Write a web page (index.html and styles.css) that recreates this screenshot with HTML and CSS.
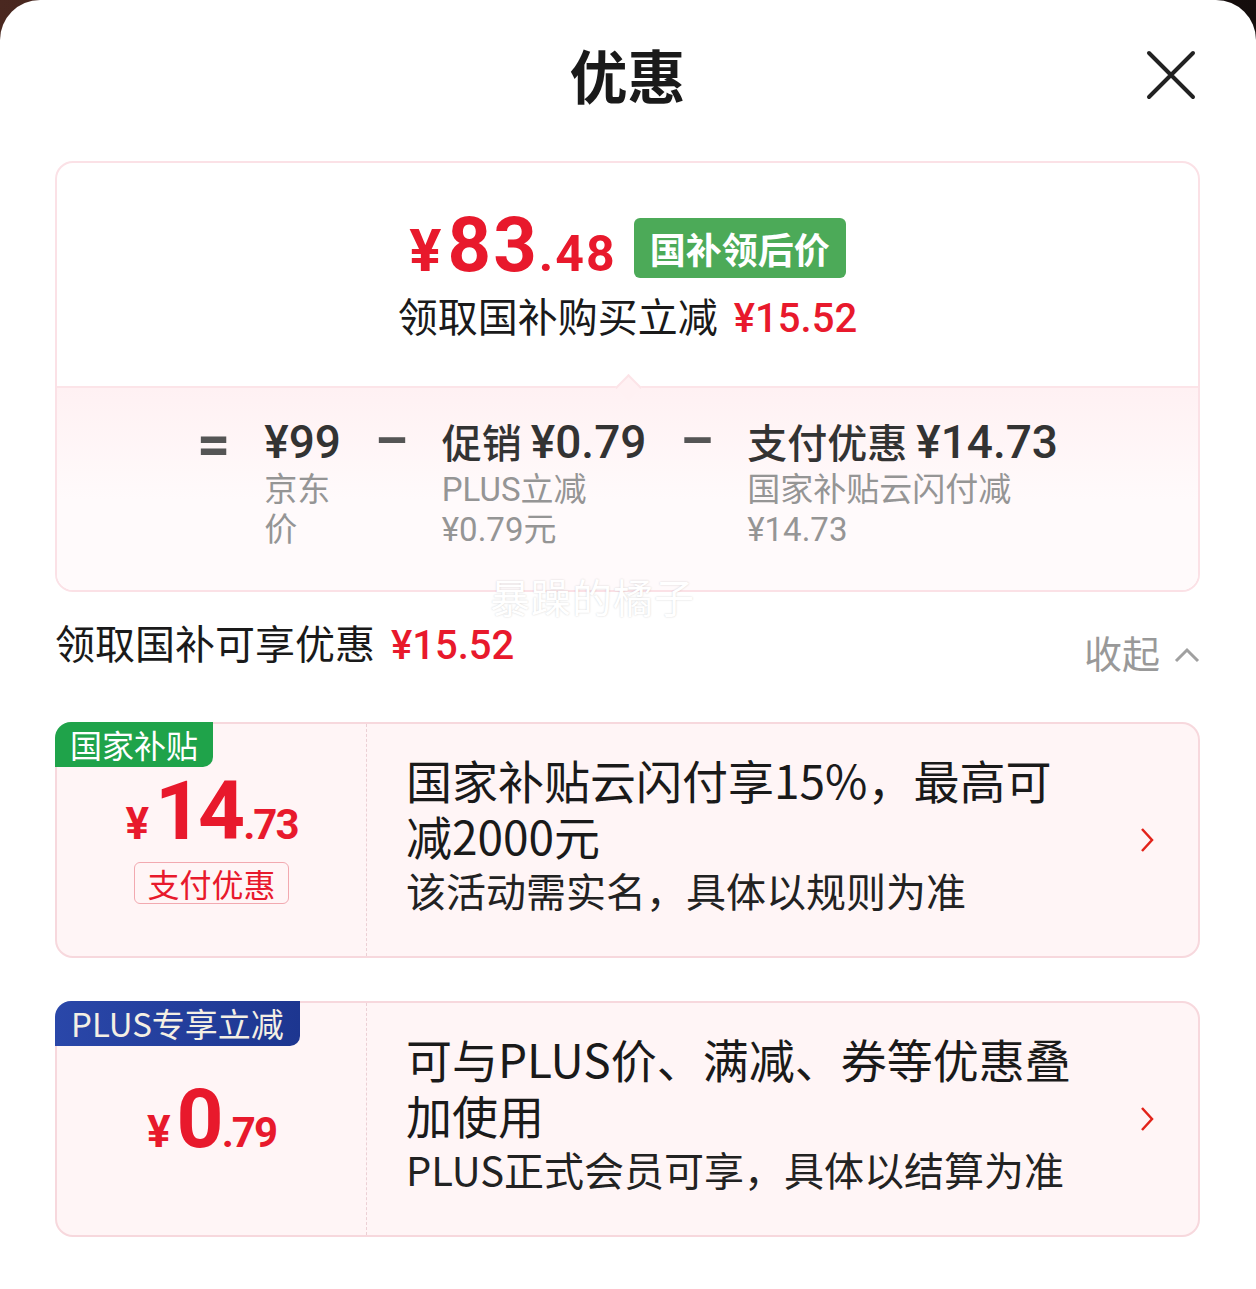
FILE: index.html
```html
<!DOCTYPE html>
<html lang="zh-CN">
<head>
    <meta charset="UTF-8">
    <title>优惠</title>
    <link rel="stylesheet" href="styles.css">
</head>
<body>
<div class="sheet">
    <header class="sheet-head">
        <h1>优惠</h1>
        <button class="close" aria-label="关闭">
            <svg width="52" height="52" viewBox="0 0 52 52"><path d="M4 4 L48 48 M48 4 L4 48" stroke="#222" stroke-width="4" stroke-linecap="round" fill="none"/></svg>
        </button>
    </header>

    <section class="summary">
        <div class="summary-top">
            <div class="final">
                <span class="final-price"><span class="yen">¥</span>83<span class="dec">.48</span></span>
                <span class="final-tag">国补领后价</span>
            </div>
            <p class="save">领取国补购买立减<em>¥15.52</em></p>
        </div>
        <div class="summary-bottom">
            <div class="formula">
                <span class="op op-eq">=</span>
                <div class="term">
                    <div class="term-main"><b>¥99</b></div>
                    <div class="term-sub">京东价</div>
                </div>
                <span class="op">–</span>
                <div class="term">
                    <div class="term-main">促销 <b>¥0.79</b></div>
                    <div class="term-sub">PLUS立减¥0.79元</div>
                </div>
                <span class="op">–</span>
                <div class="term">
                    <div class="term-main">支付优惠 <b>¥14.73</b></div>
                    <div class="term-sub">国家补贴云闪付减¥14.73</div>
                </div>
            </div>
        </div>
        <span class="watermark">暴躁的橘子</span>
    </section>

    <div class="gain">
        <p class="gain-title">领取国补可享优惠<em>¥15.52</em></p>
        <div class="collapse">
            收起
            <svg width="26" height="18" viewBox="0 0 26 18"><path d="M2 15 L13 4 L24 15" stroke="#a0a0a0" stroke-width="3" fill="none"/></svg>
        </div>
    </div>

    <div class="coupons">
        <div class="coupon">
            <span class="coupon-tag tag-green">国家补贴</span>
            <div class="coupon-left">
                <div class="coupon-price"><span class="yen">¥</span><span class="int">14</span><span class="dec">.73</span></div>
                <span class="coupon-kind">支付优惠</span>
            </div>
            <div class="coupon-right">
                <div class="coupon-text">
                    <p class="coupon-title">国家补贴云闪付享15%，最高可减2000元</p>
                    <p class="coupon-desc">该活动需实名，具体以规则为准</p>
                </div>
                <svg class="arrow" width="16" height="28" viewBox="0 0 16 28"><path d="M3 3 L13 14 L3 25" stroke="#e2231a" stroke-width="2.5" fill="none"/></svg>
            </div>
        </div>

        <div class="coupon">
            <span class="coupon-tag tag-blue">PLUS专享立减</span>
            <div class="coupon-left">
                <div class="coupon-price"><span class="yen">¥</span><span class="int">0</span><span class="dec">.79</span></div>
            </div>
            <div class="coupon-right">
                <div class="coupon-text">
                    <p class="coupon-title">可与PLUS价、满减、券等优惠叠加使用</p>
                    <p class="coupon-desc">PLUS正式会员可享，具体以结算为准</p>
                </div>
                <svg class="arrow" width="16" height="28" viewBox="0 0 16 28"><path d="M3 3 L13 14 L3 25" stroke="#e2231a" stroke-width="2.5" fill="none"/></svg>
            </div>
        </div>
    </div>
</div>
</body>
</html>
```

FILE: styles.css
```css
* {
    margin: 0;
    padding: 0;
    box-sizing: border-box;
}
body {
    background: linear-gradient(90deg, #4a2820, #140d0c);
    font-family: "Noto Sans CJK SC", "Noto Sans", sans-serif;
    color: #1a1a1a;
}
.sheet {
    width: 1256px;
    min-height: 1289px;
    background: #fff;
    border-radius: 40px 40px 0 0;
    padding: 0 56px 0 55px;
}

/* header */
.sheet-head {
    height: 150px;
    display: grid;
    grid-template-columns: 1fr auto 1fr;
    align-items: center;
}
.sheet-head h1 {
    grid-column: 2;
    font-size: 58px;
    font-weight: 700;
    line-height: 1;
    margin-top: -3px;
}
.close {
    grid-column: 3;
    justify-self: end;
    margin-right: 3px;
    width: 52px;
    height: 52px;
    border: none;
    background: none;
}
.close svg { display: block; }

/* summary card */
.summary {
    margin-top: 11px;
    border: 2px solid #fbe1e6;
    border-radius: 18px;
    position: relative;
}
.summary-top {
    padding: 42px 0 46px;
    text-align: center;
}
.final {
    display: flex;
    justify-content: center;
    align-items: center;
    height: 80px;
}
.final-price {
    font-family: Roboto, sans-serif;
    font-weight: 700;
    font-size: 76px;
    line-height: 80px;
    color: #e8192c;
    letter-spacing: 2px;
}
.final-price .yen {
    font-size: 60px;
    line-height: 1;
    margin-right: 4px;
}
.final-price .dec {
    font-size: 50px;
    line-height: 1;
}
.final-tag {
    margin-left: 17px;
    margin-top: 6px;
    height: 60px;
    line-height: 60px;
    padding: 0 16px;
    background: #4caa58;
    color: #fff;
    font-size: 36px;
    font-weight: 700;
    border-radius: 6px;
}
.save {
    margin-top: 5px;
    height: 50px;
    font-size: 40px;
    line-height: 50px;
    color: #1a1a1a;
}
.save em, .gain-title em {
    font-style: normal;
    font-family: Roboto, sans-serif;
    font-weight: 500;
    line-height: 1;
    color: #e8192c;
    margin-left: 16px;
}

.summary-bottom {
    position: relative;
    border-top: 2px solid #fce4e8;
    border-radius: 0 0 16px 16px;
    background: linear-gradient(#fff1f3, #fffafb 55%);
    padding: 28px 0 40px;
}
.summary-bottom::before {
    content: "";
    position: absolute;
    left: 50%;
    top: -10px;
    width: 17px;
    height: 17px;
    margin-left: -9px;
    background: #fff1f3;
    border-top: 2px solid #fce4e8;
    border-left: 2px solid #fce4e8;
    transform: rotate(45deg);
}
.formula {
    display: flex;
    justify-content: center;
    align-items: flex-start;
    gap: 34px;
}
.op {
    font-family: Roboto, sans-serif;
    font-size: 52px;
    font-weight: 700;
    line-height: 50px;
    color: #555;
}
.op-eq {
    font-size: 58px;
    margin-top: 3px;
}
.term {
    width: min-content;
}
.term-main {
    height: 50px;
    font-size: 40px;
    font-weight: 500;
    line-height: 50px;
    color: #333;
    white-space: nowrap;
}
.term-main b {
    font-family: Roboto, sans-serif;
    font-size: 46px;
    font-weight: 500;
    line-height: 1;
}
.term-sub {
    margin-top: 4px;
    font-family: Roboto, "Noto Sans CJK SC", sans-serif;
    font-size: 33px;
    line-height: 40px;
    color: #959595;
}
.watermark {
    position: absolute;
    left: 433px;
    top: 413px;
    font-size: 40px;
    line-height: 40px;
    letter-spacing: 1px;
    color: #fff;
    text-shadow: 0 0 2px rgba(0, 0, 0, 0.18);
}

/* gain row */
.gain {
    display: flex;
    justify-content: space-between;
    align-items: flex-start;
    height: 60px;
    margin: 21px 0 49px;
}
.gain-title {
    height: 58px;
    font-size: 40px;
    line-height: 58px;
}
.collapse {
    display: flex;
    align-items: center;
    padding-top: 16px;
    font-size: 38px;
    line-height: 46px;
    color: #999;
}
.collapse svg {
    margin-left: 14px;
    margin-top: 6px;
}

/* coupons */
.coupons {
    display: flex;
    flex-direction: column;
    gap: 43px;
}
.coupon {
    position: relative;
    display: flex;
    height: 236px;
    border: 2px solid #f7d8dd;
    border-radius: 18px;
    background: #fff5f6;
}
.coupon-tag {
    position: absolute;
    top: -2px;
    left: -2px;
    height: 45px;
    line-height: 45px;
    padding: 0 15px;
    font-size: 32px;
    border-radius: 16px 0 10px 0;
}
.tag-green {
    background: #1fa34a;
    color: #fff;
}
.tag-blue {
    background: linear-gradient(90deg, #2a47a9, #1d3690);
    color: #f4efe4;
    font-size: 33px;
    padding: 0 16px;
}
.coupon-left {
    width: 310px;
    border-right: 1px dashed #ecd0d5;
    display: flex;
    flex-direction: column;
    align-items: center;
    justify-content: center;
}
.coupon-price {
    font-family: Roboto, sans-serif;
    font-weight: 700;
    font-size: 82px;
    line-height: 70px;
    color: #e8192c;
}
.coupon-price .yen {
    font-size: 44px;
    line-height: 1;
    margin-right: 6px;
}
.coupon-price .int {
    letter-spacing: -4px;
    margin-right: 2px;
}
.coupon-price .dec {
    font-size: 42px;
    line-height: 1;
    letter-spacing: -2px;
}
.coupon-kind {
    margin-top: 16px;
    height: 42px;
    line-height: 40px;
    padding: 0 12px;
    border: 1px solid #f2a9b0;
    border-radius: 6px;
    font-size: 32px;
    color: #e8192c;
}
.coupon-right {
    flex: 1;
    display: flex;
    align-items: center;
    gap: 47px;
    padding: 0 43px 0 39px;
}
.coupon-text {
    flex: 1;
    padding-bottom: 12px;
}
.coupon-title {
    font-size: 46px;
    line-height: 56px;
    color: #1a1a1a;
}
.coupon-desc {
    font-size: 40px;
    line-height: 54px;
    color: #222;
}
.arrow {
    flex: none;
    display: block;
}
```
